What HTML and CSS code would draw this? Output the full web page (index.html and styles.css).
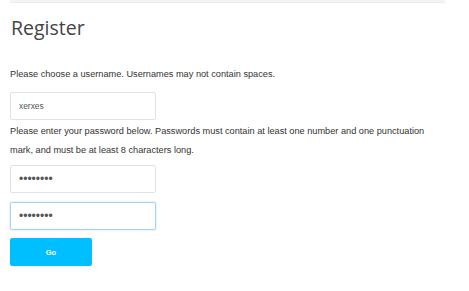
FILE: index.html
```html
<!DOCTYPE html>
<html lang="en">
<head>
    <meta charset="UTF-8">
    <meta name="viewport" content="width=device-width, initial-scale=1.0">
    <title>Register</title>
    <link rel="stylesheet" href="styles.css">
</head>
<body>
    <div class="topbar"></div>
    <div class="page">
        <h1>Register</h1>
        <form id="registerForm">
            <p class="hint">Please choose a username. Usernames may not contain spaces.</p>
            <input type="text" class="field" value="xerxes">
            <p class="hint second">Please enter your password below. Passwords must contain at least one number and one punctuation mark, and must be at least 8 characters long.</p>
            <input type="password" class="field" value="abcdefgh">
            <input type="password" class="field focused" value="abcdefgh">
            <button type="submit">Go</button>
        </form>
    </div>
</body>
</html>
```

FILE: styles.css
```css
body {
    margin: 0;
    font-family: "Liberation Sans", Arial, sans-serif;
    color: #333;
    background: #fff;
}
.topbar {
    margin: 0 24px 0 10px;
    height: 2px;
    background-color: #f4f4f4;
    border-bottom: 1px solid #ececec;
}
.page {
    padding: 0 24px 0 10px;
}
h1 {
    font-family: "Open Sans", sans-serif;
    font-weight: normal;
    font-size: 19.5px;
    color: #444;
    margin: 11px 0 0 1px;
    line-height: 28px;
}
.hint {
    font-size: 9.2px;
    line-height: 19px;
    margin: 23px 0 8px;
}
.hint.second {
    margin: 2px 0 5px;
}
.field {
    display: block;
    box-sizing: border-box;
    width: 146px;
    height: 28px;
    padding: 0 8px;
    margin: 0;
    border: 1px solid #e2e2e2;
    border-radius: 2px;
    font-family: "Liberation Sans", Arial, sans-serif;
    font-size: 8.4px;
    color: #555;
    outline: none;
}
.field[type="password"] {
    font-size: 12px;
}
.field + .field {
    margin-top: 9px;
}
.focused {
    border-color: #a8d3f7;
    box-shadow: 0 0 2px rgba(120, 180, 240, 0.5);
}
button {
    display: block;
    width: 82px;
    height: 28px;
    margin-top: 8px;
    background-color: #00bfff;
    color: white;
    font-family: "Liberation Sans", Arial, sans-serif;
    font-weight: bold;
    font-size: 7.5px;
    border: none;
    border-radius: 2px;
    cursor: pointer;
}
```
